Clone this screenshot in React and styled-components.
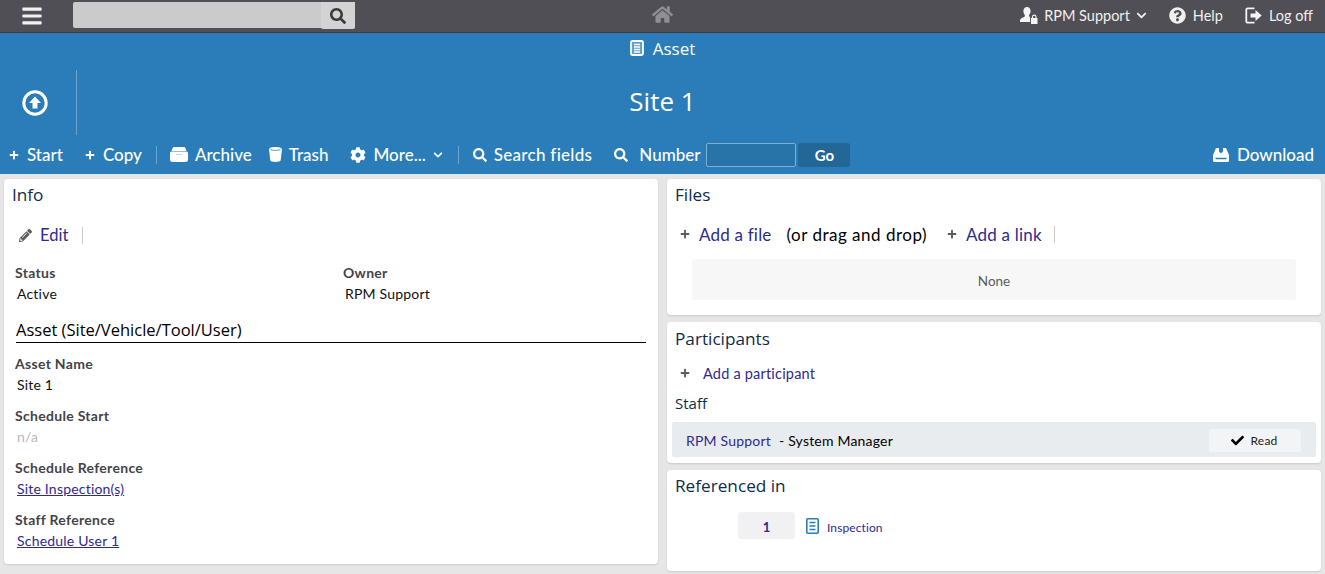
import styled, { createGlobalStyle } from "styled-components";
import { FaBars, FaSearch, FaHome, FaChevronDown, FaQuestionCircle, FaPlus, FaCog, FaPencilAlt, FaCheck } from "react-icons/fa";

const GlobalStyle = createGlobalStyle`
  html, body { margin: 0; padding: 0; }
  body {
    background: #e6e6e6;
    font-family: "Lato", "Liberation Sans", sans-serif;
    overflow: hidden;
  }
`;

const Page = styled.div`
  width: 1325px;
  height: 574px;
  display: flex;
  flex-direction: column;
  overflow: hidden;
`;

const TopBar = styled.header`
  height: 32px;
  flex: none;
  background: #504f55;
  border-bottom: 1px solid #3a3a3d;
  display: grid;
  grid-template-columns: 1fr auto 1fr;
  align-items: center;
  color: #f4f4f4;
`;

const TopLeft = styled.div`
  display: flex;
  align-items: center;
  padding-left: 21px;
  gap: 30px;
`;

const SearchBox = styled.div`
  width: 282px;
  height: 26px;
  margin-top: -2px;
  background: #cbcbcb;
  border-radius: 2px;
  display: flex;
  justify-content: flex-end;
`;

const SearchButton = styled.div`
  width: 34px;
  height: 27px;
  background: #d3d3d3;
  border-radius: 0 0 2px 2px;
  display: flex;
  align-items: center;
  justify-content: center;
  color: #3a3a3d;
  font-size: 16px;
`;

const HomeLink = styled.div`
  color: #8f8f92;
  font-size: 21px;
  display: flex;
  margin-top: -4px;
`;

const TopRight = styled.nav`
  display: flex;
  justify-content: flex-end;
  align-items: center;
  padding-right: 12px;
  margin-top: -1px;
`;

const TopItem = styled.span`
  display: inline-flex;
  align-items: center;
  gap: ${p => p.$gap || 7}px;
  margin-left: ${p => p.$left || 0}px;
  font-size: 14.5px;
  color: #f0f0f0;
`;

const Hero = styled.section`
  flex: none;
  height: 141px;
  background: #2a7db8;
  color: #fff;
  display: flex;
  flex-direction: column;
`;

const TypeRow = styled.div`
  height: 30px;
  padding-bottom: 2px;
  margin-bottom: 5px;
  display: flex;
  align-items: center;
  justify-content: center;
  gap: 9px;
  font-family: "Open Sans", sans-serif;
  font-size: 17px;
  font-weight: 500;
`;

const TitleRow = styled.div`
  height: 65px;
  display: flex;
`;

const UpCell = styled.div`
  width: 70px;
  padding-right: 6px;
  flex: none;
  border-right: 1px solid #6ba4cd;
  display: flex;
  align-items: center;
  justify-content: center;
`;

const Title = styled.h1`
  flex: 1;
  margin: 0;
  padding-right: 77px;
  text-align: center;
  font-family: "Open Sans", sans-serif;
  font-size: 26px;
  font-weight: 500;
  line-height: 62px;
`;

const Toolbar = styled.div`
  flex: 1;
  display: flex;
  align-items: center;
  padding: 0 11px 0 9px;
  font-size: 17px;
  font-weight: 500;
`;

const ToolItem = styled.span`
  display: inline-flex;
  align-items: center;
  gap: ${p => p.$gap || 7}px;
  margin-right: ${p => p.$right || 0}px;
  letter-spacing: ${p => p.$track || 0}px;
  white-space: nowrap;
`;

const Divider = styled.span`
  width: 1px;
  height: 18px;
  background: #6ba4cd;
  margin-right: ${p => p.$right || 0}px;
`;

const NumberInput = styled.div`
  width: 88px;
  height: 22px;
  border: 1px solid #7fb0d3;
  border-radius: 2px;
  background: #2873a8;
  margin: 0 2px 0 6px;
`;

const GoButton = styled.div`
  width: 52px;
  height: 24px;
  background: #226796;
  border-radius: 3px;
  display: flex;
  align-items: center;
  justify-content: center;
  font-size: 15px;
  font-weight: 700;
`;

const Spacer = styled.div`
  flex: 1;
`;

const Main = styled.main`
  flex: 1;
  display: grid;
  grid-template-columns: 654px 654px;
  column-gap: 9px;
  padding: 5px 4px 0;
  align-items: start;
`;

const Column = styled.div`
  display: flex;
  flex-direction: column;
  gap: 7px;
`;

const Card = styled.div`
  background: #fff;
  border-radius: 4px;
  box-shadow: 0 1px 2px rgba(0, 0, 0, 0.12);
  height: ${p => p.$height}px;
  padding: ${p => p.$top || 4}px 8px 0;
  box-sizing: border-box;
`;

const CardTitle = styled.h2`
  margin: 0;
  font-family: "Open Sans", sans-serif;
  font-size: 17.2px;
  font-weight: 400;
  line-height: 23px;
  color: #0f2c4c;
`;

const ActionRow = styled.div`
  height: 24px;
  margin: ${p => p.$margin};
  display: flex;
  align-items: center;
  font-size: ${p => p.$size || 17}px;
  letter-spacing: ${p => p.$track || 0}px;
  color: #000;
`;

const ActionIcon = styled.span`
  color: #5c5c5c;
  font-size: 13px;
  display: inline-flex;
  margin-left: ${p => p.$left || 0}px;
  margin-right: ${p => p.$right || 8}px;
`;

const ActionLink = styled.a`
  color: #2e2a8f;
  margin-right: ${p => p.$right || 0}px;
`;

const DragHint = styled.span`
  letter-spacing: 0.5px;
`;

const ActionDivider = styled.span`
  width: 1px;
  height: 17px;
  background: #c9c9c9;
  margin-left: ${p => p.$left || 14}px;
`;

const FieldGrid = styled.div`
  display: grid;
  grid-template-columns: 328px 1fr;
  margin: 17px 0 0 3px;
`;

const Field = styled.div``;

const FieldLabel = styled.div`
  font-size: 14px;
  line-height: 18px;
  font-weight: 700;
  letter-spacing: 0.3px;
  color: #45434a;
`;

const FieldValue = styled.div`
  margin: 1px 0 0 2px;
  font-size: 14px;
  letter-spacing: 0.2px;
  line-height: 21px;
  color: ${p => (p.$muted ? "#b9b9b9" : "#111")};
`;

const ValueLink = styled.a`
  color: #2e2a8f;
  text-decoration: underline;
`;

const SectionHeading = styled.h3`
  margin: 15px 4px 12px 4px;
  padding-bottom: 1px;
  border-bottom: 1px solid #000;
  font-family: "Open Sans", sans-serif;
  font-size: 16.5px;
  font-weight: 400;
  line-height: 22px;
  color: #000;
`;

const FieldStack = styled.div`
  margin-left: 3px;
  display: flex;
  flex-direction: column;
  gap: 12px;
`;

const NoneBox = styled.div`
  margin: 13px 17px 0;
  height: 41px;
  padding-top: 2px;
  box-sizing: border-box;
  background: #f7f7f7;
  border-radius: 3px;
  display: flex;
  align-items: center;
  justify-content: center;
  font-size: 13.5px;
  color: #5a5a5a;
`;

const SubHeading = styled.div`
  margin: 8px 0 0;
  font-family: "Open Sans", sans-serif;
  font-size: 15px;
  line-height: 20px;
  color: #0f2c4c;
`;

const StaffRow = styled.div`
  margin: 9px -3px 0 -3px;
  height: 35px;
  background: #e9ecef;
  border-radius: 2px;
  display: flex;
  align-items: center;
  padding: 1px 15px 0 14px;
  box-sizing: border-box;
  font-size: 14px;
  letter-spacing: 0.2px;
`;

const StaffName = styled.a`
  color: #2e2a8f;
  margin-right: 8px;
`;

const RoleBadge = styled.div`
  margin-left: auto;
  width: 92px;
  height: 23px;
  background: #f3f4f5;
  border-radius: 3px;
  display: flex;
  align-items: center;
  justify-content: center;
  gap: 7px;
  padding-right: 2px;
  box-sizing: border-box;
  font-size: 12px;
  color: #222;
  svg { font-size: 13px; color: #000; }
`;

const RefRow = styled.div`
  margin: 15px 0 0 63px;
  display: flex;
  align-items: center;
`;

const CountBox = styled.div`
  width: 57px;
  height: 27px;
  padding-top: 3px;
  box-sizing: border-box;
  background: #f1f1f3;
  border-radius: 3px;
  display: flex;
  align-items: center;
  justify-content: center;
  font-size: 13px;
  font-weight: 700;
  color: #2e2a8f;
  margin-right: 11px;
`;

const RefLink = styled.a`
  margin: 3px 0 0 8px;
  font-size: 12px;
  letter-spacing: 0.1px;
  color: #2e2a8f;
`;

const UpCircleIcon = () => (
  <svg width="26" height="26" viewBox="0 0 26 26">
    <circle cx="13" cy="13" r="11.200" fill="none" stroke="#fff" strokeWidth="3" />
    <path d="M13 6.500l6 6.500h-3.500v5.500h-5V13H7z" fill="#fff" />
  </svg>
);

const DocIcon = () => (
  <svg width="14" height="16" viewBox="0 0 14 16">
    <rect x="1" y="1" width="12" height="14" rx="1.5" fill="#5fa0cf" stroke="#fff" strokeWidth="1.800" />
    <path d="M4 4.500h6M4 7h6M4 9.500h6M4 12h6" stroke="#fff" strokeWidth="1.300" />
  </svg>
);

const RefDocIcon = () => (
  <svg width="13" height="16" viewBox="0 0 13 16">
    <rect x="0.8" y="0.8" width="11.4" height="14.4" rx="1" fill="#fff" stroke="#2a7db8" strokeWidth="1.600" />
    <path d="M3.500 4.500h6M3.500 8h6M3.500 11.500h6" stroke="#2a7db8" strokeWidth="1.500" />
  </svg>
);

const UserLockIcon = () => (
  <svg width="18" height="17" viewBox="0 0 18 17" fill="#f4f4f4">
    <path d="M7 0c2.300 0 3.600 1.700 3.600 4 0 1.500-.6 3-1.500 3.900v1.500l1 .5V15H0v-1.500c0-2 2.600-2.600 4.800-3.900V7.900C3.900 7 3.400 5.500 3.400 4 3.400 1.700 4.700 0 7 0z" />
    <path d="M11 11h6.500v6H11z" />
    <path d="M12.500 11V9.900a1.750 1.750 0 0 1 3.500 0V11" fill="none" stroke="#f4f4f4" strokeWidth="1.100" />
  </svg>
);

const LogOffIcon = () => (
  <svg width="17" height="17" viewBox="0 0 17 17">
    <path d="M9.500 1.300H2.800a1.500 1.500 0 0 0-1.500 1.500v11.400a1.500 1.500 0 0 0 1.500 1.500h6.700" fill="none" stroke="#f4f4f4" strokeWidth="1.800" />
    <path d="M5.500 6.500h5V3l6.200 5.500-6.200 5.500v-3.500h-5z" fill="#f4f4f4" />
  </svg>
);

const ArchiveIcon = () => (
  <svg width="18" height="15" viewBox="0 0 18 15" fill="#fff">
    <path d="M4 0h10a1.500 1.500 0 0 1 1.400 1L16.500 4h-15L2.600 1A1.500 1.500 0 0 1 4 0z" />
    <path d="M1.500 4.500h15A1.500 1.500 0 0 1 18 6v6.500a2.500 2.500 0 0 1-2.500 2.500h-13A2.500 2.500 0 0 1 0 12.500V6a1.500 1.500 0 0 1 1.500-1.500z" />
    <path d="M6 7.500h6" stroke="#bcd8ec" strokeWidth="1" />
  </svg>
);

const TrashIcon = () => (
  <svg width="13" height="15" viewBox="0 0 13 15" fill="#fff">
    <path d="M0 2.500C0 .8 3 0 6.500 0S13 .8 13 2.500l-1.300 10.800c-.2 1.100-2.500 1.700-5.200 1.700s-5-.6-5.200-1.700z" />
    <path d="M1.500 2.600c1.500 1 8.500 1 10 0" fill="none" stroke="#2a7db8" strokeWidth="0.800" />
  </svg>
);

const DownloadIcon = () => (
  <svg width="16" height="14" viewBox="0 0 16 14" fill="#fff">
    <path d="M3 0h3v3.500L8 5.500l2-2V0h3l3 7v5.500a1.500 1.500 0 0 1-1.500 1.500h-13A1.500 1.500 0 0 1 0 12.500V7z" />
    <path d="M2.500 10.500h11" stroke="#2a7db8" strokeWidth="1.500" />
  </svg>
);

const ToolSearchIcon = styled(FaSearch)`
  font-size: 14px;
`;

export default function App() {
  return (
    <Page>
      <GlobalStyle />
      <TopBar>
        <TopLeft>
          <FaBars size={22} color="#f1f1f1" />
          <SearchBox>
            <SearchButton><FaSearch /></SearchButton>
          </SearchBox>
        </TopLeft>
        <HomeLink><FaHome /></HomeLink>
        <TopRight>
          <TopItem $gap={6}><UserLockIcon />RPM Support <FaChevronDown size={11} /></TopItem>
          <TopItem $left={22}><FaQuestionCircle size={17} />Help</TopItem>
          <TopItem $left={22}><LogOffIcon />Log off</TopItem>
        </TopRight>
      </TopBar>

      <Hero>
        <TypeRow><DocIcon />Asset</TypeRow>
        <TitleRow>
          <UpCell><UpCircleIcon /></UpCell>
          <Title>Site 1</Title>
        </TitleRow>
        <Toolbar>
          <ToolItem $right={22} $gap={8}><FaPlus size={10} />Start</ToolItem>
          <ToolItem $right={14} $gap={8}><FaPlus size={10} />Copy</ToolItem>
          <Divider $right={13} />
          <ToolItem $right={17} $gap={7}><ArchiveIcon />Archive</ToolItem>
          <ToolItem $right={22}><TrashIcon />Trash</ToolItem>
          <ToolItem $right={15} $gap={7}><FaCog size={16} />More... <FaChevronDown size={10} /></ToolItem>
          <Divider $right={14} />
          <ToolItem $right={22} $track={0.3} $gap={7}><ToolSearchIcon />Search fields</ToolItem>
          <ToolItem $gap={11}><ToolSearchIcon />Number</ToolItem>
          <NumberInput />
          <GoButton>Go</GoButton>
          <Spacer />
          <ToolItem $gap={8}><DownloadIcon />Download</ToolItem>
        </Toolbar>
      </Hero>

      <Main>
        <Column>
          <Card $height={385}>
            <CardTitle>Info</CardTitle>
            <ActionRow $margin="17px 0 0 7px" $size={16.5}>
              <ActionIcon $right={8}><FaPencilAlt /></ActionIcon>
              <ActionLink>Edit</ActionLink>
              <ActionDivider />
            </ActionRow>
            <FieldGrid>
              <Field>
                <FieldLabel>Status</FieldLabel>
                <FieldValue>Active</FieldValue>
              </Field>
              <Field>
                <FieldLabel>Owner</FieldLabel>
                <FieldValue>RPM Support</FieldValue>
              </Field>
            </FieldGrid>
            <SectionHeading>Asset (Site/Vehicle/Tool/User)</SectionHeading>
            <FieldStack>
              <Field>
                <FieldLabel>Asset Name</FieldLabel>
                <FieldValue>Site 1</FieldValue>
              </Field>
              <Field>
                <FieldLabel>Schedule Start</FieldLabel>
                <FieldValue $muted>n/a</FieldValue>
              </Field>
              <Field>
                <FieldLabel>Schedule Reference</FieldLabel>
                <FieldValue><ValueLink>Site Inspection(s)</ValueLink></FieldValue>
              </Field>
              <Field>
                <FieldLabel>Staff Reference</FieldLabel>
                <FieldValue><ValueLink>Schedule User 1</ValueLink></FieldValue>
              </Field>
            </FieldStack>
          </Card>
        </Column>
        <Column>
          <Card $height={136}>
            <CardTitle>Files</CardTitle>
            <ActionRow $margin="16px 0 0 5px" $track={0.2}>
              <ActionIcon $right={9}><FaPlus size={10} /></ActionIcon>
              <ActionLink $right={15}>Add a file</ActionLink>
              <DragHint>(or drag and drop)</DragHint>
              <ActionIcon $left={20} $right={9}><FaPlus size={10} /></ActionIcon>
              <ActionLink>Add a link</ActionLink>
              <ActionDivider $left={12} />
            </ActionRow>
            <NoneBox>None</NoneBox>
          </Card>
          <Card $height={141} $top={5}>
            <CardTitle>Participants</CardTitle>
            <ActionRow $margin="11px 0 0 5px" $size={14.5} $track={0.2}>
              <ActionIcon $right={13}><FaPlus size={10} /></ActionIcon>
              <ActionLink>Add a participant</ActionLink>
            </ActionRow>
            <SubHeading>Staff</SubHeading>
            <StaffRow>
              <StaffName>RPM Support</StaffName>
              - System Manager
              <RoleBadge><FaCheck />Read</RoleBadge>
            </StaffRow>
          </Card>
          <Card $height={101}>
            <CardTitle>Referenced in</CardTitle>
            <RefRow>
              <CountBox>1</CountBox>
              <RefDocIcon />
              <RefLink>Inspection</RefLink>
            </RefRow>
          </Card>
        </Column>
      </Main>
    </Page>
  );
}
